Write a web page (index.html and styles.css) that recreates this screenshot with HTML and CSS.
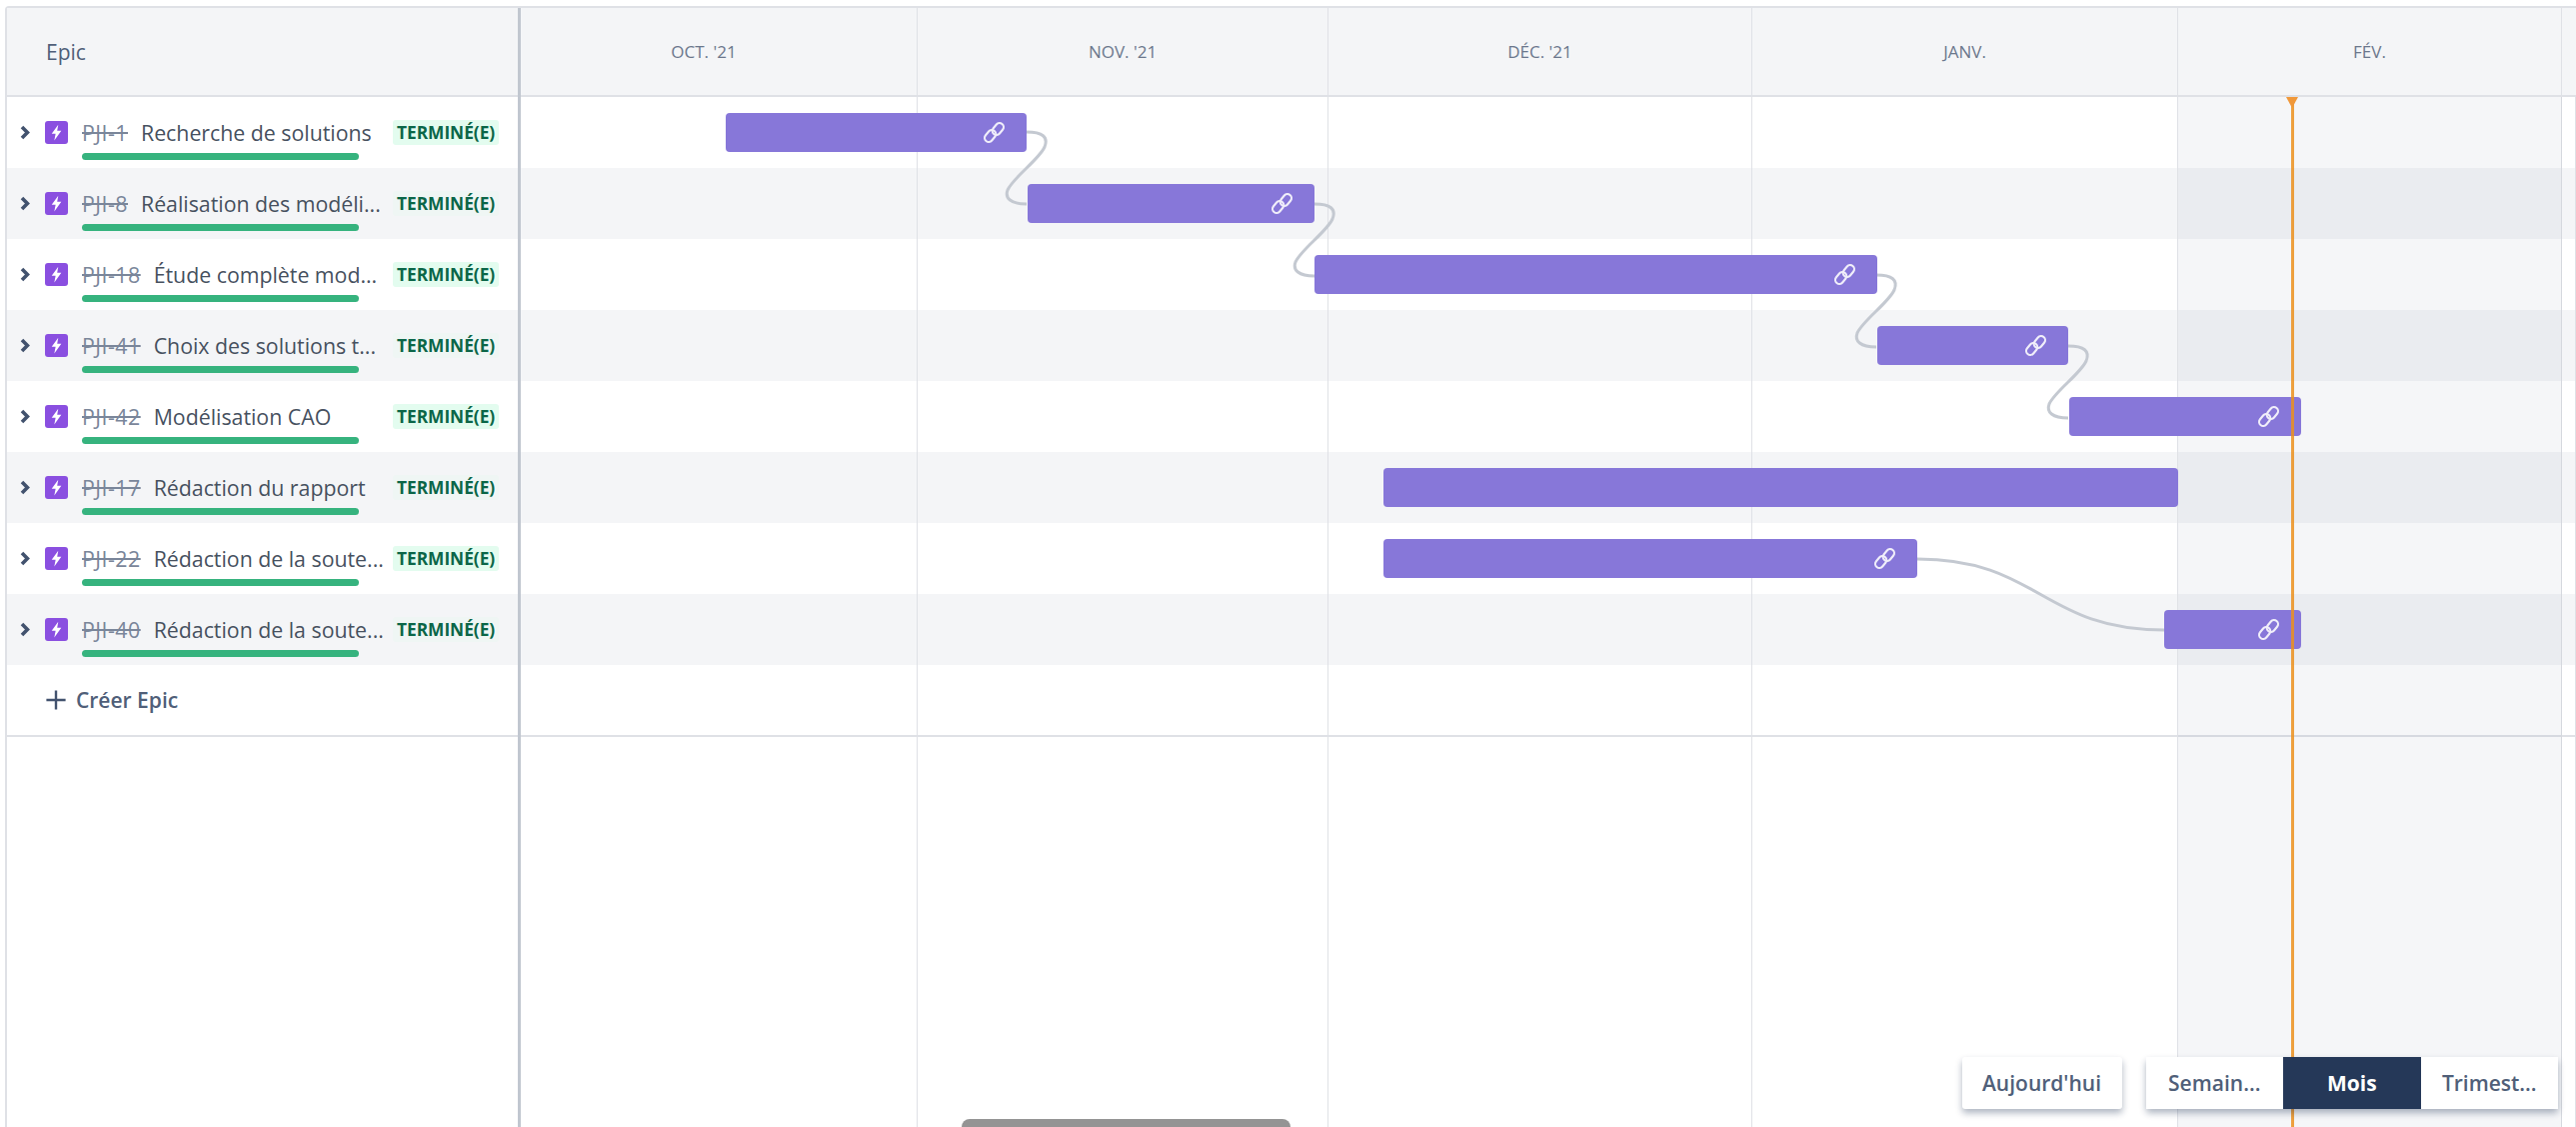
FILE: index.html
```html
<!DOCTYPE html>
<html lang="fr">
<head>
<meta charset="utf-8">
<title>Feuille de route</title>
<link rel="stylesheet" href="styles.css">
</head>
<body>
<svg class="defs" width="0" height="0" aria-hidden="true">
  <symbol id="bolt" viewBox="0 0 24 24"><path d="M14 3 6.500 13.500H11L9.500 21 17.500 10H12.800Z" fill="#fff"/></symbol>
  <symbol id="chain" viewBox="0 0 24 24"><g fill="none" stroke="#fff" stroke-width="2.2" opacity=".88"><rect x="12" y="1.500" width="8.500" height="13.500" rx="4.250" transform="rotate(40 16 8)"/><rect x="3.500" y="9" width="8.500" height="13.500" rx="4.250" transform="rotate(40 8 16)"/></g></symbol>
</svg>
<main class="frame">
  <aside class="side">
    <div class="side-head">Epic</div>
    <div class="row"><svg class="chev" viewBox="0 0 10 14"><path d="M2.500 2.500 7 7l-4.500 4.500" /></svg><svg class="type"><use href="#bolt"/></svg><div class="info"><div class="line"><s class="key">PJI-1</s><span class="name">Recherche de solutions</span></div><div class="prog"></div></div><span class="loz">TERMINÉ(E)</span></div>
    <div class="row"><svg class="chev" viewBox="0 0 10 14"><path d="M2.500 2.500 7 7l-4.500 4.500" /></svg><svg class="type"><use href="#bolt"/></svg><div class="info"><div class="line"><s class="key">PJI-8</s><span class="name">Réalisation des modéli...</span></div><div class="prog"></div></div><span class="loz">TERMINÉ(E)</span></div>
    <div class="row"><svg class="chev" viewBox="0 0 10 14"><path d="M2.500 2.500 7 7l-4.500 4.500" /></svg><svg class="type"><use href="#bolt"/></svg><div class="info"><div class="line"><s class="key">PJI-18</s><span class="name">Étude complète mod...</span></div><div class="prog"></div></div><span class="loz">TERMINÉ(E)</span></div>
    <div class="row"><svg class="chev" viewBox="0 0 10 14"><path d="M2.500 2.500 7 7l-4.500 4.500" /></svg><svg class="type"><use href="#bolt"/></svg><div class="info"><div class="line"><s class="key">PJI-41</s><span class="name">Choix des solutions t...</span></div><div class="prog"></div></div><span class="loz">TERMINÉ(E)</span></div>
    <div class="row"><svg class="chev" viewBox="0 0 10 14"><path d="M2.500 2.500 7 7l-4.500 4.500" /></svg><svg class="type"><use href="#bolt"/></svg><div class="info"><div class="line"><s class="key">PJI-42</s><span class="name">Modélisation CAO</span></div><div class="prog"></div></div><span class="loz">TERMINÉ(E)</span></div>
    <div class="row"><svg class="chev" viewBox="0 0 10 14"><path d="M2.500 2.500 7 7l-4.500 4.500" /></svg><svg class="type"><use href="#bolt"/></svg><div class="info"><div class="line"><s class="key">PJI-17</s><span class="name">Rédaction du rapport</span></div><div class="prog"></div></div><span class="loz">TERMINÉ(E)</span></div>
    <div class="row"><svg class="chev" viewBox="0 0 10 14"><path d="M2.500 2.500 7 7l-4.500 4.500" /></svg><svg class="type"><use href="#bolt"/></svg><div class="info"><div class="line"><s class="key">PJI-22</s><span class="name">Rédaction de la soute...</span></div><div class="prog"></div></div><span class="loz">TERMINÉ(E)</span></div>
    <div class="row"><svg class="chev" viewBox="0 0 10 14"><path d="M2.500 2.500 7 7l-4.500 4.500" /></svg><svg class="type"><use href="#bolt"/></svg><div class="info"><div class="line"><s class="key">PJI-40</s><span class="name">Rédaction de la soute...</span></div><div class="prog"></div></div><span class="loz">TERMINÉ(E)</span></div>
    <div class="create"><svg class="plus" viewBox="0 0 20 20"><path d="M10 2v16M2 10h16"/></svg>Créer Epic</div>
  </aside>
  <section class="chart">
    <div class="months">
      <div class="month oct">OCT. '21</div>
      <div class="month nov">NOV. '21</div>
      <div class="month dec">DÉC. '21</div>
      <div class="month jan">JANV.</div>
      <div class="month feb">FÉV.</div>
      <div class="month next"></div>
    </div>
    <div class="plot">
      <div class="stripes">
        <div class="stripe"></div><div class="stripe"></div><div class="stripe"></div><div class="stripe"></div>
        <div class="stripe"></div><div class="stripe"></div><div class="stripe"></div><div class="stripe"></div>
        <div class="stripe"></div>
      </div>
      <div class="cols">
        <div class="col oct"></div><div class="col nov"></div><div class="col dec"></div><div class="col jan"></div><div class="col feb now"></div><div class="col next"></div>
      </div>
      <svg class="links" width="2056" height="1030">
        <g fill="none" stroke="#c4c9d1" stroke-width="3">
          <path d="M506 35c16 0 22 5 18 15-6 13-31 30-37 43-3 8 3 14 19 14"/>
          <path d="M794 107c16 0 22 5 18 15-6 13-31 30-37 43-3 8 3 14 19 14"/>
          <path d="M1356 178c16 0 22 5 18 15-6 13-31 30-37 43-3 8 3 14 19 14"/>
          <path d="M1548 249c16 0 22 5 18 15-6 13-31 30-37 43-3 8 3 14 19 14"/>
          <path d="M1397 462c122 0 125 71 247 71"/>
        </g>
      </svg>
      <div class="bar" style="left:205px;width:301px;top:16px"><svg class="chain"><use href="#chain"/></svg></div>
      <div class="bar" style="left:507px;width:287px;top:87px"><svg class="chain"><use href="#chain"/></svg></div>
      <div class="bar" style="left:794px;width:563px;top:158px"><svg class="chain"><use href="#chain"/></svg></div>
      <div class="bar" style="left:1357px;width:191px;top:229px"><svg class="chain"><use href="#chain"/></svg></div>
      <div class="bar" style="left:1549px;width:232px;top:300px"><svg class="chain"><use href="#chain"/></svg></div>
      <div class="bar" style="left:863px;width:795px;top:371px"></div>
      <div class="bar" style="left:863px;width:534px;top:442px"><svg class="chain"><use href="#chain"/></svg></div>
      <div class="bar" style="left:1644px;width:137px;top:513px"><svg class="chain"><use href="#chain"/></svg></div>
      <div class="today"></div>
    </div>
    <div class="thumb"></div>
    <div class="controls">
      <button class="btn solo">Aujourd'hui</button>
      <div class="seg">
        <button class="btn">Semain...</button>
        <button class="btn on">Mois</button>
        <button class="btn">Trimest...</button>
      </div>
    </div>
  </section>
</main>
</body>
</html>
```
FILE: styles.css
```css
* { box-sizing: border-box; }
html, body { margin: 0; height: 100%; background: #fff; overflow: hidden; }
body { padding: 6px 0 0 5px; font-family: "Open Sans", "Noto Sans", sans-serif; color: #42526e; }
.defs { position: absolute; }
.frame { display: flex; height: 1121px; border-top: 2px solid #dfe1e6; border-left: 2px solid #dfe1e6; border-top-left-radius: 4px; }
.side { flex: 0 0 514px; border-right: 3px solid #c1c7d0; background: #fff; }
.side-head { height: 89px; padding-left: 39px; display: flex; align-items: center; background: #f4f5f7; border-bottom: 2px solid #dfe1e6; font-size: 21px; color: #505f79; }
.row { height: 71px; display: flex; align-items: flex-start; padding-left: 12px; }
.row:nth-of-type(even) { background: #fff; }
.row:nth-of-type(odd) { background: #f4f5f7; }
.chev { width: 12px; height: 17px; margin-top: 27px; fill: none; stroke: #42526e; stroke-width: 3; }
.type { width: 23px; height: 23px; margin: 24px 0 0 14px; padding: 1px; background: #8a4fe0; border-radius: 3px; }
.info { width: 277px; margin-left: 14px; }
.line { height: 56px; padding-top: 22px; display: flex; font-size: 21.300px; line-height: 28px; white-space: nowrap; }
.key { color: #7a869a; margin-right: 13px; letter-spacing: .5px; }
.name { color: #47515f; }
.prog { height: 7px; background: #36b37e; border-radius: 4px; }
.loz { margin: 23px 0 0 34px; height: 25px; padding: 0 4px; display: flex; align-items: center; background: #e3fcef; border-radius: 3px; color: #0b6648; font-size: 17.300px; font-weight: 700; white-space: nowrap; }
.row:nth-of-type(odd) .loz { background: #eff6f4; }
.create { height: 72px; padding-left: 37px; display: flex; align-items: center; gap: 8px; font-size: 21px; font-weight: 600; color: #505f79; border-bottom: 2px solid #dfe1e6; }
.plus { width: 24px; height: 24px; fill: none; stroke: #42526e; stroke-width: 2; }
.chart { flex: 1; position: relative; overflow: hidden; min-width: 0; }
.months { height: 89px; display: flex; background: #f4f5f7; border-bottom: 2px solid #dfe1e6; }
.month { display: flex; align-items: center; justify-content: center; font-size: 17px; color: #6b778c; border-right: 1px solid #dfe1e6; }
.oct { flex: 0 0 397px; padding-right: 30px; }
.nov { flex: 0 0 411px; }
.dec { flex: 0 0 424px; }
.jan { flex: 0 0 426px; }
.feb { flex: 0 0 384px; }
.next { flex: 1; border-right: 0; }
.plot { position: relative; height: 1030px; }
.stripes { height: 640px; border-bottom: 2px solid #dfe1e6; }
.stripe { height: 71px; }
.stripe:nth-child(even) { background: #f4f5f7; }
.cols { position: absolute; inset: 0; display: flex; }
.col { border-right: 1px solid #dfe1e6; }
.now { background: rgba(9, 30, 66, .04); border-right-color: #d5d8de; }
.links { position: absolute; left: 0; top: 0; }
.bar { position: absolute; height: 39px; background: #8777d9; border-radius: 4px; }
.chain { position: absolute; right: 21px; top: 8px; width: 23px; height: 23px; }
.today { position: absolute; left: 1771px; top: 0; bottom: 0; width: 3px; background: rgba(235, 145, 30, .85); }
.today::before { content: ""; position: absolute; left: -5px; top: 0; border: 6.500px solid transparent; border-top: 11px solid #f0983a; border-bottom: 0; }
.thumb { position: absolute; left: 441px; bottom: -1px; width: 329px; height: 9px; background: #949494; border-radius: 8px 8px 0 0; }
.controls { position: absolute; right: 18px; bottom: 18px; display: flex; gap: 24px; }
.seg { display: flex; box-shadow: 0 4px 7px rgba(9, 30, 66, .33); border-radius: 3px; background: #fff; }
.btn { height: 52px; width: 137.500px; border: 0; background: #fff; font: 600 21px "Open Sans", "Noto Sans", sans-serif; color: #505f79; padding: 0; }
.solo { width: 160px; box-shadow: 0 4px 7px rgba(9, 30, 66, .33); border-radius: 3px; }
.on { background: #253858; color: #fff; font-weight: 700; }
```
